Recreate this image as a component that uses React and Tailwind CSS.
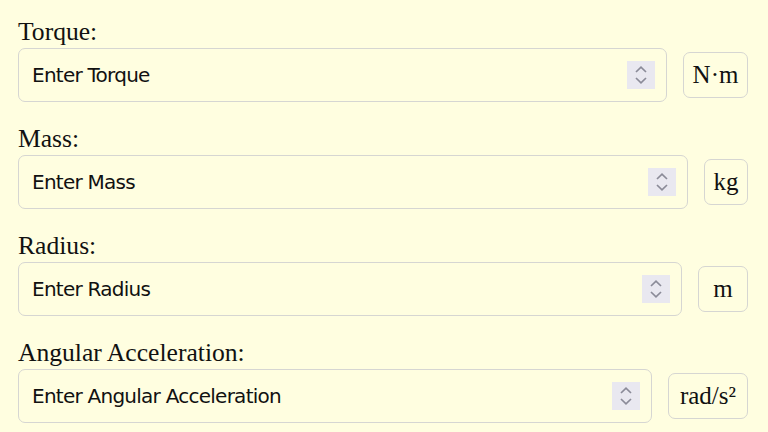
import React, { useState } from 'react';

const fields = [
  { key: 'torque', label: 'Torque:', placeholder: 'Enter Torque', unit: 'N·m', unitWidth: 'w-[65px]' },
  { key: 'mass', label: 'Mass:', placeholder: 'Enter Mass', unit: 'kg', unitWidth: 'w-[44px]' },
  { key: 'radius', label: 'Radius:', placeholder: 'Enter Radius', unit: 'm', unitWidth: 'w-[50px]' },
  { key: 'alpha', label: 'Angular Acceleration:', placeholder: 'Enter Angular Acceleration', unit: 'rad/s²', unitWidth: 'w-[80px]' },
];

const Spinner = () => (
  <div className="flex h-[28px] w-[28px] shrink-0 flex-col items-center justify-center gap-[4px] bg-[#e9e8f0]">
    <svg width="12" height="7" viewBox="0 0 12 7" fill="none">
      <path d="M1 6L6 1.2L11 6" stroke="#8b8b98" strokeWidth="1.7" />
    </svg>
    <svg width="12" height="7" viewBox="0 0 12 7" fill="none">
      <path d="M1 1L6 5.8L11 1" stroke="#8b8b98" strokeWidth="1.7" />
    </svg>
  </div>
);

const App = () => {
  const [values, setValues] = useState({ torque: '', mass: '', radius: '', alpha: '' });

  const handleChange = (e) => {
    setValues({ ...values, [e.target.name]: e.target.value });
  };

  return (
    <div className="min-h-screen w-full bg-[#fffee0] pl-[18px] pr-[20px] pt-[18px]">
      {fields.map((f) => (
        <div key={f.key} className="mb-[23px]">
          <label
            htmlFor={f.key}
            className="block h-[28px] text-[25.6px] leading-[28px] text-[#111] [font-family:'Liberation_Serif',serif]"
          >
            {f.label}
          </label>
          <div className="mt-[2px] flex items-center gap-[16px]">
            <div className="flex h-[54px] flex-1 items-center rounded-[7px] border-[1.5px] border-[#d6d6d2] pl-[13px] pr-[11px]">
              <input
                id={f.key}
                name={f.key}
                type="text"
                value={values[f.key]}
                onChange={handleChange}
                placeholder={f.placeholder}
                className="min-w-0 flex-1 bg-transparent text-[20px] text-[#111] outline-none placeholder:text-[#111] [font-family:'DejaVu_Sans',sans-serif] tracking-[-0.75px]"
              />
              <Spinner />
            </div>
            <div
              className={`flex h-[46px] ${f.unitWidth} shrink-0 items-center justify-center rounded-[7px] border-[1.5px] border-[#d6d6d2] text-[25px] text-[#111] [font-family:'Liberation_Serif',serif]`}
            >
              {f.unit}
            </div>
          </div>
        </div>
      ))}
    </div>
  );
};

export default App;
